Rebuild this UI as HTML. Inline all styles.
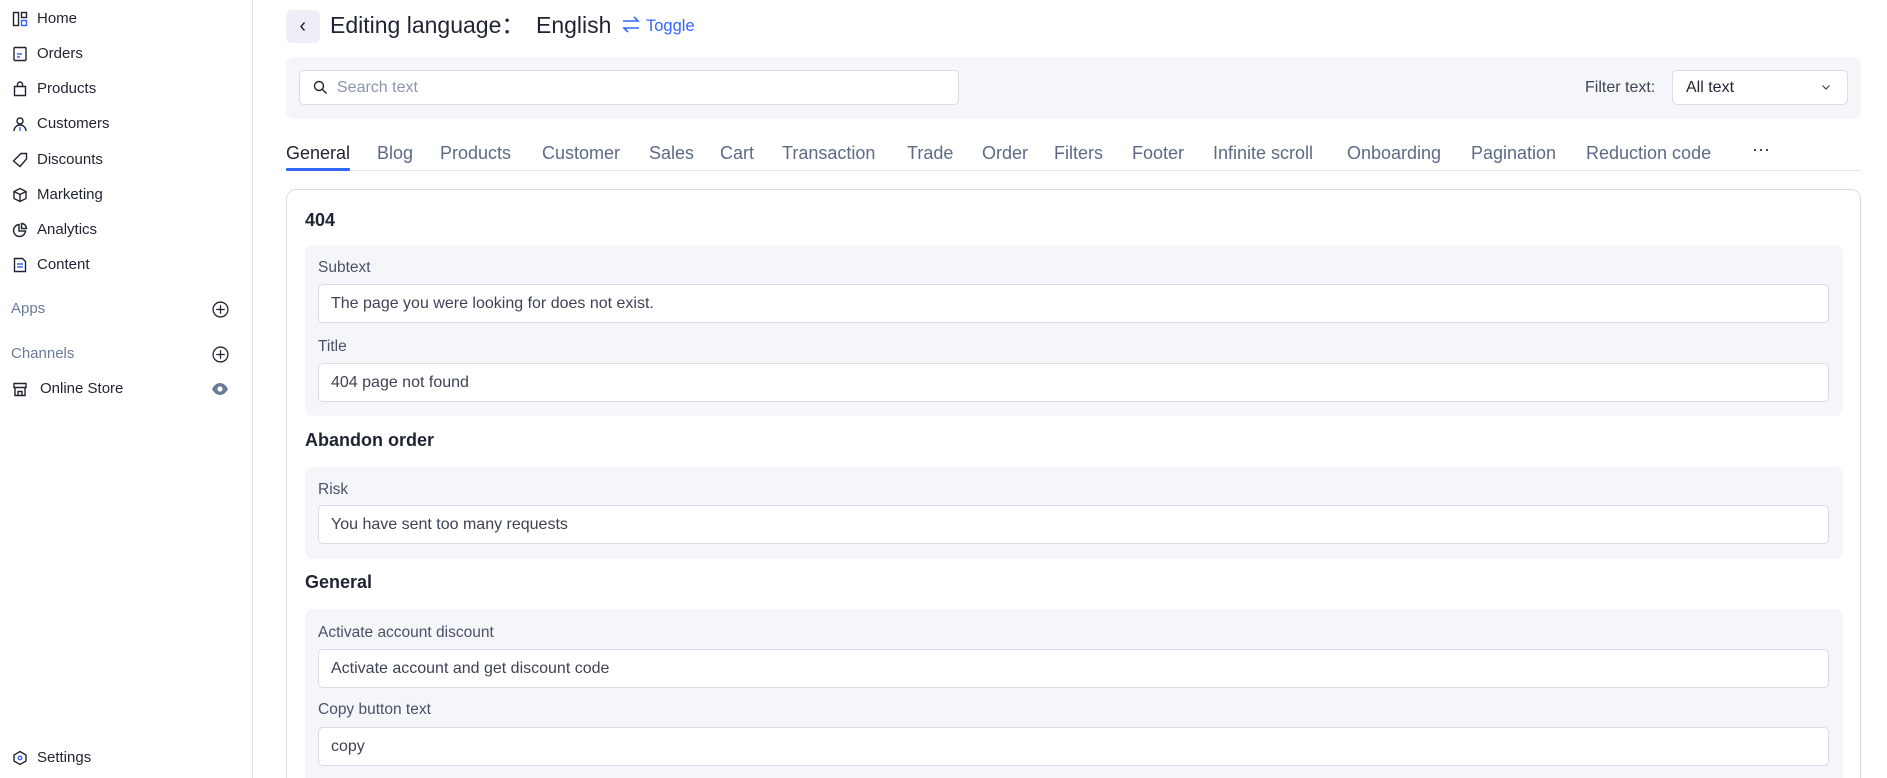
<!DOCTYPE html>
<html style="width:1887px;height:778px;overflow:hidden"><head><meta charset="utf-8"><style>
*{box-sizing:border-box;margin:0;padding:0}
body{width:1887px;height:778px;overflow:hidden;background:#fff;font-family:"Liberation Sans","Noto Sans CJK SC",sans-serif;color:#1f2433;position:relative}
.a{position:absolute}
.side{left:0;top:0;width:253px;height:778px;border-right:1px solid #dfe2ea}
.nav{position:absolute;left:37px;font-size:15px;color:#1f2433;line-height:18px}
.ic{position:absolute;left:12px;width:16px;height:16px}
.sec{position:absolute;left:11px;font-size:15px;color:#6b7a99}
.tab{position:absolute;top:142px;font-size:18px;color:#5d6a87;line-height:22px}
.lbl{position:absolute;left:318px;font-size:15.5px;color:#4a5166;line-height:18px}
.inp{position:absolute;left:318px;width:1511px;height:39px;background:#fff;border:1px solid #d9dce8;border-radius:5px;font-size:16px;color:#3d4355;padding-left:12px;line-height:37px}
.grp{position:absolute;left:305px;width:1538px;background:#f5f6fa;border-radius:8px}
.h{position:absolute;left:305px;font-size:18px;font-weight:bold;color:#1f2433;line-height:22px}
</style></head><body>
<div class="a side"></div>
<svg class="ic" style="top:11px" viewBox="0 0 16 16" fill="none" stroke="#1f2433" stroke-width="1.4"><rect x="1.5" y="1.5" width="5" height="13"/><rect x="9.5" y="1.5" width="5" height="5"/><path d="M9.5 9.5h5v5h-5z" stroke="#3366ff"/></svg>
<div class="nav" style="top:10px">Home</div>
<svg class="ic" style="top:46px" viewBox="0 0 16 16" fill="none" stroke="#1f2433" stroke-width="1.4"><rect x="2" y="1.5" width="12" height="13" rx="1"/><path d="M5 8h5M5 11h3" stroke="#3366ff"/></svg>
<div class="nav" style="top:45px">Orders</div>
<svg class="ic" style="top:81px" viewBox="0 0 16 16" fill="none" stroke="#1f2433" stroke-width="1.4"><path d="M2.5 5.5h11v9h-11z M5.5 5.5V3.5a2.5 2.5 0 0 1 5 0v2"/></svg>
<div class="nav" style="top:80px">Products</div>
<svg class="ic" style="top:116px" viewBox="0 0 16 16" fill="none" stroke="#1f2433" stroke-width="1.4"><circle cx="8" cy="5" r="3"/><path d="M2 15a6 6 0 0 1 12 0"/><path d="M8 11v4" stroke="#3366ff"/></svg>
<div class="nav" style="top:115px">Customers</div>
<svg class="ic" style="top:152px" viewBox="0 0 16 16" fill="none" stroke="#1f2433" stroke-width="1.4"><path d="M9 1.5h5.5V7L8 14.5 1.5 9z"/></svg>
<div class="nav" style="top:151px">Discounts</div>
<svg class="ic" style="top:187px" viewBox="0 0 16 16" fill="none" stroke="#1f2433" stroke-width="1.4"><path d="M8 1.5l6 3v7l-6 3-6-3v-7z M2 4.5l6 3 6-3 M8 7.5v7"/></svg>
<div class="nav" style="top:186px">Marketing</div>
<svg class="ic" style="top:222px" viewBox="0 0 16 16" fill="none" stroke="#1f2433" stroke-width="1.4"><path d="M7 2.5a6 6 0 1 0 6.5 6.5H7z"/><path d="M9.5 1.5a5 5 0 0 1 5 5h-5z"/></svg>
<div class="nav" style="top:221px">Analytics</div>
<svg class="ic" style="top:257px" viewBox="0 0 16 16" fill="none" stroke="#1f2433" stroke-width="1.4"><path d="M2.5 1.5h8l3 3v10h-11z"/><path d="M5 7h6M5 10h6" stroke="#3366ff"/></svg>
<div class="nav" style="top:256px">Content</div>
<div class="sec" style="top:300px">Apps</div>
<div class="sec" style="top:345px">Channels</div>
<svg class="a" style="left:212px;top:301px" width="17" height="17" viewBox="0 0 16 16" fill="none" stroke="#1f2433" stroke-width="1.2"><circle cx="8" cy="8" r="7"/><path d="M8 4v8M4 8h8"/></svg>
<svg class="a" style="left:212px;top:346px" width="17" height="17" viewBox="0 0 16 16" fill="none" stroke="#1f2433" stroke-width="1.2"><circle cx="8" cy="8" r="7"/><path d="M8 4v8M4 8h8"/></svg>
<svg class="ic" style="top:381px" viewBox="0 0 16 16" fill="none" stroke="#1f2433" stroke-width="1.4"><path d="M2 2.5h12v4H2z M3 6.5v8h10v-8 M6 14.5v-4h4v4"/></svg>
<div class="nav" style="top:380px;left:40px">Online Store</div>
<svg class="a" style="left:211px;top:382px" width="18" height="14" viewBox="0 0 18 14"><path d="M1 7c2-4 5-6 8-6s6 2 8 6c-2 4-5 6-8 6s-6-2-8-6z" fill="#6b7a99"/><circle cx="9" cy="7" r="2.6" fill="#fff"/></svg>
<svg class="ic" style="top:750px" viewBox="0 0 16 16" fill="none" stroke="#1f2433" stroke-width="1.4"><path d="M8 1.5l6 3.5v6l-6 3.5-6-3.5v-6z"/><circle cx="8" cy="8" r="1.8" stroke="#3366ff"/></svg>
<div class="nav" style="top:749px">Settings</div>

<div class="a" style="left:286px;top:10px;width:34px;height:33px;background:#eeeff6;border-radius:6px"></div>
<svg class="a" style="left:298px;top:21px" width="10" height="11" viewBox="0 0 10 11" fill="none" stroke="#1f2433" stroke-width="1.4"><path d="M6.5 1.5L3 5.5l3.5 4"/></svg>
<div class="a" style="left:330px;top:11px;font-size:23px;line-height:28px;color:#1f2433">Editing language：</div>
<div class="a" style="left:536px;top:11px;font-size:23px;line-height:28px;color:#1f2433">English</div>
<svg class="a" style="left:622px;top:16px" width="18" height="17" viewBox="0 0 18 17" fill="none" stroke="#3366ff" stroke-width="1.6"><path d="M1 5h15l-4-4M17 12H2l4 4"/></svg>
<div class="a" style="left:646px;top:16px;font-size:16.5px;color:#3366ff;line-height:20px">Toggle</div>

<div class="a" style="left:286px;top:57px;width:1575px;height:62px;background:#f5f6fa;border-radius:8px"></div>
<div class="a" style="left:299px;top:70px;width:660px;height:35px;background:#fff;border:1px solid #d9dce8;border-radius:5px"></div>
<svg class="a" style="left:313px;top:80px" width="15" height="15" viewBox="0 0 15 15" fill="none" stroke="#1f2433" stroke-width="1.4"><circle cx="6" cy="6" r="4.5"/><path d="M9.5 9.5l4 4"/></svg>
<div class="a" style="left:337px;top:78px;font-size:16px;color:#8a94ad;line-height:19px">Search text</div>
<div class="a" style="left:1585px;top:78px;font-size:16px;color:#3d4355;line-height:19px">Filter text:</div>
<div class="a" style="left:1672px;top:70px;width:176px;height:35px;background:#fff;border:1px solid #d9dce8;border-radius:5px"></div>
<div class="a" style="left:1686px;top:78px;font-size:16px;color:#1f2433;line-height:19px">All text</div>
<svg class="a" style="left:1821px;top:84px" width="10" height="7" viewBox="0 0 10 7" fill="none" stroke="#3d4355" stroke-width="1.2"><path d="M1.5 1.5L5 5l3.5-3.5"/></svg>

<div class="tab" style="left:286px;color:#1f2433">General</div>
<div class="tab" style="left:377px">Blog</div>
<div class="tab" style="left:440px">Products</div>
<div class="tab" style="left:542px">Customer</div>
<div class="tab" style="left:649px">Sales</div>
<div class="tab" style="left:720px">Cart</div>
<div class="tab" style="left:782px">Transaction</div>
<div class="tab" style="left:907px">Trade</div>
<div class="tab" style="left:982px">Order</div>
<div class="tab" style="left:1054px">Filters</div>
<div class="tab" style="left:1132px">Footer</div>
<div class="tab" style="left:1213px">Infinite scroll</div>
<div class="tab" style="left:1347px">Onboarding</div>
<div class="tab" style="left:1471px">Pagination</div>
<div class="tab" style="left:1586px">Reduction code</div>
<div class="tab" style="left:1752px;color:#1f2433;top:138px">···</div>
<div class="a" style="left:286px;top:170px;width:1575px;height:1px;background:#e6e8ef"></div>
<div class="a" style="left:286px;top:168px;width:64px;height:3px;background:#3366ff;border-radius:1px"></div>

<div class="a" style="left:286px;top:189px;width:1575px;height:589px;border:1px solid #d9dce8;border-bottom:none;border-radius:10px 10px 0 0"></div>
<div class="h" style="top:209px">404</div>
<div class="grp" style="top:245px;height:171px"></div>
<div class="lbl" style="top:259px">Subtext</div>
<div class="inp" style="top:284px">The page you were looking for does not exist.</div>
<div class="lbl" style="top:338px">Title</div>
<div class="inp" style="top:363px">404 page not found</div>
<div class="h" style="top:429px">Abandon order</div>
<div class="grp" style="top:467px;height:92px"></div>
<div class="lbl" style="top:481px">Risk</div>
<div class="inp" style="top:505px">You have sent too many requests</div>
<div class="h" style="top:571px">General</div>
<div class="grp" style="top:609px;height:169px;border-radius:8px 8px 0 0"></div>
<div class="lbl" style="top:624px">Activate account discount</div>
<div class="inp" style="top:649px">Activate account and get discount code</div>
<div class="lbl" style="top:701px">Copy button text</div>
<div class="inp" style="top:727px">copy</div>
</body></html>
